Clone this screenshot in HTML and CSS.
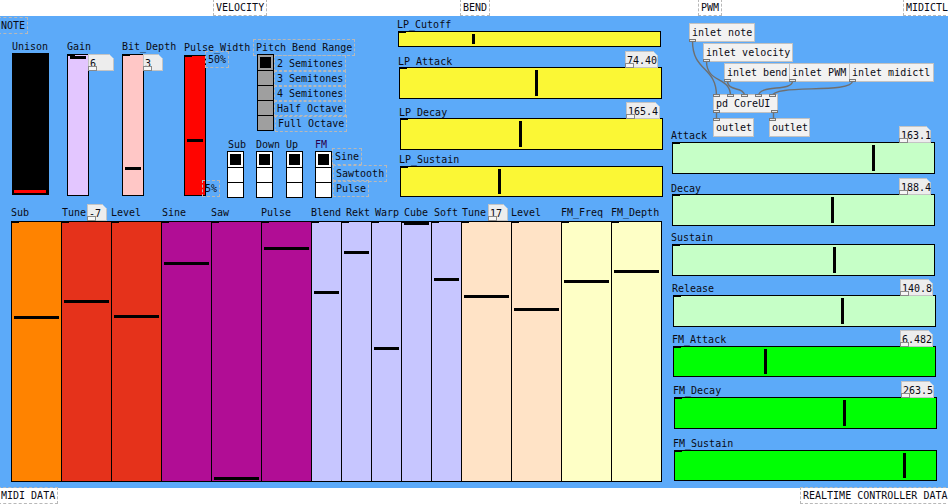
FILE: index.html
```html
<!DOCTYPE html>
<html>
<head>
<meta charset="utf-8">
<link rel="stylesheet" href="styles.css">
</head>
<body>
<div class="patch">
  <div class="cnv"></div>

  <div class="cm c-vel">VELOCITY</div>
  <div class="cm c-bend">BEND</div>
  <div class="cm c-pwm">PWM</div>
  <div class="cm c-midictl">MIDICTL</div>
  <div class="cm c-note">NOTE</div>
  <div class="cm c-mididata">MIDI DATA</div>
  <div class="cm c-rt">REALTIME CONTROLLER DATA</div>

  <!-- vertical sliders top-left -->
  <div class="txt l-unison">Unison</div>
  <div class="vs vs-unison"><div class="h red" style="top:136px"></div></div>
  <div class="txt l-gain">Gain</div>
  <div class="vs vs-gain"><div class="h" style="top:1px"></div></div>
  <div class="atom a-gain">6</div>
  <div class="txt l-bit">Bit_Depth</div>
  <div class="vs vs-bit"><div class="h" style="top:112px"></div></div>
  <div class="atom a-bit">3</div>
  <div class="txt l-pw">Pulse_Width</div>
  <div class="vs vs-pw"><div class="h" style="top:83px"></div></div>
  <div class="cm c-50">50%</div>
  <div class="cm c-5">5%</div>

  <!-- pitch bend range -->
  <div class="cm c-pbr">Pitch Bend Range</div>
  <div class="vr vr-pbr grey">
    <div class="c on"></div><div class="c"></div><div class="c"></div><div class="c"></div><div class="c"></div>
  </div>
  <div class="cm c-s2">2 Semitones</div>
  <div class="cm c-s3">3 Semitones</div>
  <div class="cm c-s4">4 Semitones</div>
  <div class="cm c-ho">Half Octave</div>
  <div class="cm c-fo">Full Octave</div>

  <!-- oscillator selectors -->
  <div class="txt l-sub">Sub</div>
  <div class="txt l-down">Down</div>
  <div class="txt l-up">Up</div>
  <div class="txt l-fm">FM</div>
  <div class="vr vr-sub"><div class="c on"></div><div class="c"></div><div class="c"></div></div>
  <div class="vr vr-down"><div class="c on"></div><div class="c"></div><div class="c"></div></div>
  <div class="vr vr-up"><div class="c on"></div><div class="c"></div><div class="c"></div></div>
  <div class="vr vr-fm"><div class="c on"></div><div class="c"></div><div class="c"></div></div>
  <div class="cm c-sine">Sine</div>
  <div class="cm c-saw">Sawtooth</div>
  <div class="cm c-pulse">Pulse</div>

  <!-- LP sliders -->
  <div class="txt l-lpc">LP_Cutoff</div>
  <div class="hs yel hs-lpc"><div class="h" style="left:73px"></div></div>
  <div class="txt l-lpa">LP_Attack</div>
  <div class="atom a-lpa">74.40</div>
  <div class="hs yel hs-lpa"><div class="h" style="left:135px"></div></div>
  <div class="txt l-lpd">LP_Decay</div>
  <div class="atom a-lpd">165.4</div>
  <div class="hs yel hs-lpd"><div class="h" style="left:118px"></div></div>
  <div class="txt l-lps">LP_Sustain</div>
  <div class="hs yel hs-lps"><div class="h" style="left:97px"></div></div>

  <!-- envelope sliders -->
  <div class="txt l-att">Attack</div>
  <div class="atom a-att">163.1</div>
  <div class="hs lgr hs-att"><div class="h" style="left:199px"></div></div>
  <div class="txt l-dec">Decay</div>
  <div class="atom a-dec">188.4</div>
  <div class="hs lgr hs-dec"><div class="h" style="left:158px"></div></div>
  <div class="txt l-sus">Sustain</div>
  <div class="hs lgr hs-sus"><div class="h" style="left:160px"></div></div>
  <div class="txt l-rel">Release</div>
  <div class="atom a-rel">140.8</div>
  <div class="hs lgr hs-rel"><div class="h" style="left:167px"></div></div>
  <div class="txt l-fma">FM_Attack</div>
  <div class="atom a-fma">6.482</div>
  <div class="hs grn hs-fma"><div class="h" style="left:90px"></div></div>
  <div class="txt l-fmd">FM_Decay</div>
  <div class="atom a-fmd">263.5</div>
  <div class="hs grn hs-fmd"><div class="h" style="left:168px"></div></div>
  <div class="txt l-fms">FM_Sustain</div>
  <div class="hs grn hs-fms"><div class="h" style="left:228px"></div></div>

  <!-- bank labels -->
  <div class="txt bl b1">Sub</div>
  <div class="txt bl b2">Tune</div>
  <div class="txt bl b3">Level</div>
  <div class="txt bl b4">Sine</div>
  <div class="txt bl b5">Saw</div>
  <div class="txt bl b6">Pulse</div>
  <div class="txt bl b7">Blend</div>
  <div class="txt bl b8">Rekt</div>
  <div class="txt bl b9">Warp</div>
  <div class="txt bl b10">Cube</div>
  <div class="txt bl b11">Soft</div>
  <div class="txt bl b12">Tune</div>
  <div class="txt bl b13">Level</div>
  <div class="txt bl b14">FM_Freq</div>
  <div class="txt bl b15">FM_Depth</div>
  <div class="atom a-tune1">-7</div>
  <div class="atom a-tune2">17</div>

  <!-- slider bank -->
  <div class="bank">
    <div class="col w orange"><div class="h" style="top:94px"></div></div>
    <div class="col w red2"><div class="h" style="top:78px"></div></div>
    <div class="col w red2"><div class="h" style="top:93px"></div></div>
    <div class="col w purp"><div class="h" style="top:40px"></div></div>
    <div class="col w purp"><div class="h" style="top:255px"></div></div>
    <div class="col w purp"><div class="h" style="top:25px"></div></div>
    <div class="col n lav"><div class="h" style="top:69px"></div></div>
    <div class="col n lav"><div class="h" style="top:29px"></div></div>
    <div class="col n lav"><div class="h" style="top:125px"></div></div>
    <div class="col n lav"><div class="h" style="top:0px"></div></div>
    <div class="col n lav"><div class="h" style="top:56px"></div></div>
    <div class="col w peach"><div class="h" style="top:73px"></div></div>
    <div class="col w peach"><div class="h" style="top:86px"></div></div>
    <div class="col w lyel"><div class="h" style="top:58px"></div></div>
    <div class="col w lyel"><div class="h" style="top:48px"></div></div>
  </div>

  <!-- subpatch objects -->
  <svg class="cables" width="948" height="504" viewBox="0 0 948 504">
    <path d="M692.5 41 C692.5 72 716.5 66 716.5 96"/>
    <path d="M706.5 61 C706.5 84 730.5 76 730.5 96"/>
    <path d="M727.5 81 C727.5 92 744.5 86 744.5 96"/>
    <path d="M792.5 81 C792.5 92 758.5 84 758.5 96"/>
    <path d="M852.5 81 C852.5 94 772.5 84 772.5 96"/>
    <path d="M716.5 112 L716.5 118"/>
    <path d="M773.5 112 L773.5 118"/>
  </svg>
  <div class="obj o-note">inlet note<span class="io out p0"></span></div>
  <div class="obj o-vel">inlet velocity<span class="io out p0"></span></div>
  <div class="obj o-bend">inlet bend<span class="io out p0"></span></div>
  <div class="obj o-pwm">inlet PWM<span class="io out p0"></span></div>
  <div class="obj o-midi">inlet midictl<span class="io out p0"></span></div>
  <div class="obj o-core">pd CoreUI<span class="io in p0"></span><span class="io in p1"></span><span class="io in p2"></span><span class="io in p3"></span><span class="io in p4"></span><span class="io out p0"></span><span class="io out pr"></span></div>
  <div class="obj o-out1">outlet<span class="io in p0"></span></div>
  <div class="obj o-out2">outlet<span class="io in p0"></span></div>
</div>
</body>
</html>
```

FILE: styles.css
```css
* { box-sizing: border-box; }
body { margin: 0; background: #fff; }

.patch {
  position: relative;
  width: 948px;
  height: 504px;
  overflow: hidden;
  font-family: "DejaVu Sans Mono", "Liberation Mono", monospace;
  font-size: 10px;
  line-height: 12px;
  color: #0a0a14;
}
.cnv { position: absolute; left: 0; top: 16px; width: 948px; height: 472px; background: #5caaf9; }

.txt { position: absolute; white-space: pre; z-index: 2; }
.cm {
  position: absolute;
  white-space: pre;
  border: 1px dashed #b8b8b8;
  padding: 2px 2px 1px;
}

/* comments */
.c-vel { left: 213px; top: -1px; }
.c-bend { left: 460px; top: -1px; }
.c-pwm { left: 698px; top: -1px; }
.c-midictl { left: 903px; top: -1px; }
.c-note { left: -2px; top: 17px; }
.c-mididata { left: -2px; top: 487px; }
.c-rt { left: 800px; top: 487px; }
.c-50 { left: 205px; top: 51px; }
.c-5 { left: 202px; top: 180px; }
.c-pbr { left: 253px; top: 39px; }
.c-s2 { left: 274px; top: 55px; }
.c-s3 { left: 274px; top: 70px; }
.c-s4 { left: 274px; top: 85px; }
.c-ho { left: 274px; top: 100px; }
.c-fo { left: 275px; top: 115px; }
.c-sine { left: 332px; top: 148px; }
.c-saw { left: 333px; top: 165px; }
.c-pulse { left: 333px; top: 180px; }

/* labels */
.l-unison { left: 12px; top: 41px; }
.l-gain { left: 67px; top: 41px; }
.l-bit { left: 122px; top: 41px; }
.l-pw { left: 184px; top: 42px; }
.l-sub { left: 228px; top: 139px; }
.l-down { left: 256px; top: 139px; }
.l-up { left: 286px; top: 139px; }
.l-fm { left: 315px; top: 139px; color: #2a0050; }
.l-lpc { left: 397px; top: 19px; }
.l-lpa { left: 398px; top: 56px; }
.l-lpd { left: 399px; top: 107px; }
.l-lps { left: 399px; top: 154px; }
.l-att { left: 671px; top: 130px; }
.l-dec { left: 671px; top: 183px; }
.l-sus { left: 671px; top: 232px; }
.l-rel { left: 672px; top: 283px; }
.l-fma { left: 672px; top: 334px; }
.l-fmd { left: 673px; top: 385px; }
.l-fms { left: 673px; top: 438px; }

.bl { top: 207px; }
.b1 { left: 11px; } .b2 { left: 62px; } .b3 { left: 111px; } .b4 { left: 162px; }
.b5 { left: 211px; } .b6 { left: 261px; } .b7 { left: 311px; } .b8 { left: 346px; }
.b9 { left: 375px; } .b10 { left: 404px; } .b11 { left: 434px; } .b12 { left: 462px; }
.b13 { left: 511px; } .b14 { left: 561px; } .b15 { left: 611px; }

/* vertical sliders */
.vs, .hs { position: absolute; border: 1px solid #000; }
.vs::before, .hs::before, .col::before {
  content: ""; position: absolute; left: 0; top: 0; width: 7px; height: 1px; background: #000;
}
.vs .h, .col .h { position: absolute; left: 2px; right: 2px; height: 3px; background: #000; }
.hs .h { position: absolute; top: 2px; bottom: 2px; width: 3px; background: #000; }
.h.red { background: #ff0400; left: 1px; right: 2px; }

.vs-unison { left: 12px; top: 53px; width: 37px; height: 142px; background: #000; }
.vs-gain { left: 67px; top: 54px; width: 22px; height: 142px; background: #e3c6ff; }
.vs-bit { left: 122px; top: 54px; width: 22px; height: 142px; background: #ffc7c6; }
.vs-pw { left: 184px; top: 55px; width: 22px; height: 141px; background: #ff0400; }

/* horizontal sliders */
.yel { background: #fbf735; }
.lgr { background: #c6ffc7; }
.grn { background: #00ff04; }
.hs-lpc { left: 398px; top: 31px; width: 263px; height: 16px; }
.hs-lpa { left: 399px; top: 67px; width: 263px; height: 32px; }
.hs-lpd { left: 400px; top: 118px; width: 263px; height: 32px; }
.hs-lps { left: 400px; top: 166px; width: 263px; height: 31px; }
.hs-att { left: 672px; top: 142px; width: 263px; height: 32px; }
.hs-dec { left: 672px; top: 194px; width: 263px; height: 32px; }
.hs-sus { left: 672px; top: 244px; width: 263px; height: 32px; }
.hs-rel { left: 673px; top: 295px; width: 263px; height: 32px; }
.hs-fma { left: 673px; top: 346px; width: 263px; height: 31px; }
.hs-fmd { left: 674px; top: 397px; width: 263px; height: 32px; }
.hs-fms { left: 674px; top: 450px; width: 263px; height: 31px; }

/* atoms (number boxes) */
.atom {
  position: absolute;
  height: 17px;
  padding: 3px 0 0 1px;
  background: #ededed;
  border: 1px solid #c4c4c4;
  white-space: pre;
  z-index: 3;
  clip-path: polygon(0 0, calc(100% - 5px) 0, 100% 5px, 100% 100%, 0 100%);
}
.atom::after {
  content: ""; position: absolute; left: -1px; bottom: -1px; width: 7px; height: 3px;
  border: 1px solid #8a8a8a; background: #f6f6f6;
}
.a-gain { left: 88px; top: 54px; width: 26px; }
.a-bit { left: 143px; top: 54px; width: 20px; }
.a-tune1 { left: 87px; top: 204px; width: 20px; }
.a-tune2 { left: 488px; top: 204px; width: 20px; }
.a-lpa { left: 625px; top: 51px; width: 33px; }
.a-lpd { left: 626px; top: 102px; width: 34px; }
.a-att { left: 899px; top: 126px; width: 32px; }
.a-dec { left: 899px; top: 178px; width: 32px; }
.a-rel { left: 900px; top: 279px; width: 33px; }
.a-fma { left: 900px; top: 330px; width: 33px; }
.a-fmd { left: 901px; top: 381px; width: 33px; }

/* radios */
.vr {
  position: absolute;
  width: 17px;
  border: 1px solid #000;
  display: flex;
  flex-direction: column;
  background: #fff;
}
.vr.grey { background: #9f9f9f; }
.vr .c { height: 15px; border-top: 1px solid #000; }
.vr .c:first-child { border-top: 0; }
.vr .c.on::after { content: ""; display: block; margin: 2px; width: 11px; height: 11px; background: #000; }
.vr-pbr { left: 257px; top: 54px; }
.vr-sub { left: 227px; top: 151px; }
.vr-down { left: 256px; top: 151px; }
.vr-up { left: 286px; top: 151px; }
.vr-fm { left: 315px; top: 151px; }

/* bank of vertical sliders */
.bank {
  position: absolute;
  left: 11px;
  top: 221px;
  height: 261px;
  display: flex;
}
.col { position: relative; height: 100%; border: 1px solid #000; }
.col + .col { margin-left: -1px; }
.col.w { width: 51px; }
.col.n { width: 31px; }
.orange { background: #ff8300; }
.red2 { background: #e5321b; }
.purp { background: #b10d95; }
.lav { background: #c7c6ff; }
.peach { background: #ffe3c6; }
.lyel { background: #feffc6; }

/* objects */
.cables { position: absolute; left: 0; top: 0; }
.cables path { fill: none; stroke: #6f6f6f; stroke-width: 1.4; }
.obj {
  position: absolute;
  height: 19px;
  padding: 3px 2px 1px;
  background: #f2f2f2;
  border: 1px solid #c2c2c2;
  white-space: pre;
}
.obj .io {
  position: absolute; width: 7px; height: 3px;
  border: 1px solid #777; background: #e8e8e8;
}
.io.out { bottom: -1px; }
.io.in { top: -1px; }
.io.p0 { left: -1px; } .io.p1 { left: 13px; } .io.p2 { left: 27px; }
.io.p3 { left: 41px; } .io.p4 { left: 55px; } .io.pr { right: -1px; }
.o-note { left: 689px; top: 23px; width: 66px; }
.o-vel { left: 703px; top: 43px; width: 90px; }
.o-bend { left: 724px; top: 63px; width: 66px; }
.o-pwm { left: 789px; top: 63px; width: 61px; }
.o-midi { left: 849px; top: 63px; width: 85px; }
.o-core { left: 713px; top: 94px; width: 65px; }
.o-out1 { left: 713px; top: 118px; width: 41px; }
.o-out2 { left: 769px; top: 118px; width: 41px; }
```
